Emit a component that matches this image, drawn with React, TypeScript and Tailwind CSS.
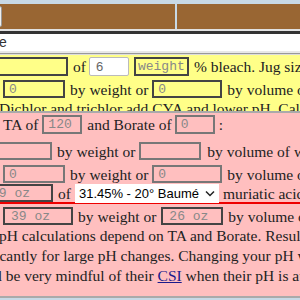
import React from "react";

const serif = { fontFamily: '"Liberation Serif", "Times New Roman", serif' };
const sans = { fontFamily: '"Liberation Sans", Arial, sans-serif' };

function Box({ w, h = "h-[19px]", value, dark = false, bg = "bg-[#ffff88]", className = "" }: { w: string; h?: string; value: string; dark?: boolean; bg?: string; className?: string }) {
  return (
    <div
      className={`${w} ${h} shrink-0 ${bg} border-2 ${dark ? "border-[#444]" : "border-[#777]"} flex items-center pl-[4px] text-[13px] leading-[15px] text-[#888] overflow-hidden ${className}`}
      style={{ fontFamily: '"Liberation Mono", "Courier New", monospace' }}
    >
      {value}
    </div>
  );
}

export default function App() {
  return (
    <div className="w-[300px] h-[300px] overflow-hidden bg-[#c8d9e6] text-[15.5px] leading-[19px] text-[#222] whitespace-nowrap" style={serif}>
      {/* top bar */}
      <div className="h-[4px]" />
      <div className="h-[25px] flex">
        <div className="w-[175px] bg-[#996633] flex items-center overflow-hidden">
          <button className="ml-[-55px] h-[21px] pl-[6px] pr-[7px] bg-[#efefef] border border-[#999] rounded-[2px] text-[13px] leading-[15px] text-black" style={sans}>
            Update
          </button>
        </div>
        <div className="w-[2px]" />
        <div className="flex-1 bg-[#996633]" />
      </div>
      <div className="h-[2px] bg-[#e0e0e0]" />
      <div className="h-[3px] bg-[#333]" />
      <div className="h-[17px] bg-white flex items-center text-[14px] text-[#333]" style={sans}>
        <span className="ml-[-1px]">e</span>
      </div>
      <div className="h-[2px] bg-[#e8e8e8]" />
      <div className="h-[1px] bg-[#999]" />
      <div className="h-[1px] bg-[#ddd]" />

      {/* yellow section */}
      <div className="bg-[#ffff88] h-[56px] overflow-hidden">
        <div className="h-[19px] flex items-center mt-[2px] ml-[-20px]">
          <Box w="w-[88px]" value="" dark />
          <span className="ml-[5px]">of</span>
          <div className="ml-[3px] w-[40px] h-[19px] shrink-0 bg-white border border-[#bbb] rounded-[2px] flex items-center pl-[6px] text-[13px] text-[#666]" style={sans}>
            6
          </div>
          <Box w="w-[55px]" value="weight" dark className="!pl-[2px] ml-[5px]" />
          <span className="ml-[5px]">% bleach. Jug size</span>
        </div>
        <div className="h-[18px] flex items-center mt-[4px] ml-[3px]">
          <Box w="w-[62px]" h="h-[18px]" value="0" dark />
          <span className="ml-[5px]">by weight or</span>
          <Box w="w-[70px]" h="h-[18px]" value="0" dark className="ml-[4px]" />
          <span className="ml-[5px]">by volume of</span>
        </div>
        <div className="ml-[-1px] leading-[18px] mt-[2px]">Dichlor and trichlor add CYA and lower pH. Cal-hypo</div>
      </div>
      <div className="h-[2px] bg-[#aaa]" />

      {/* pink section */}
      <div className="bg-[#ffbfbf] h-[183px] overflow-hidden">
        <div className="h-[19px] flex items-center ml-[3px] mt-[2px]">
          <span>TA of</span>
          <Box w="w-[40px]" value="120" bg="bg-[#ffbfbf]" className="ml-[4px]" />
          <span className="ml-[5px]">and Borate of</span>
          <Box w="w-[40px]" value="0" bg="bg-[#ffbfbf]" className="ml-[3px]" />
          <span className="ml-[4px]">:</span>
        </div>
        <div className="h-[18px] flex items-center ml-[-20px] mt-[8px]">
          <Box w="w-[72px]" h="h-[18px]" value="" bg="bg-[#ffbfbf]" />
          <span className="ml-[5px]">by weight or</span>
          <Box w="w-[62px]" h="h-[18px]" value="" bg="bg-[#ffbfbf]" className="ml-[4px]" />
          <span className="ml-[6px]">by volume of water</span>
        </div>
        <div className="h-[18px] flex items-center ml-[3px] mt-[5px]">
          <Box w="w-[62px]" h="h-[18px]" value="0" bg="bg-[#ffbfbf]" />
          <span className="ml-[5px]">by weight or</span>
          <Box w="w-[70px]" h="h-[18px]" value="0" bg="bg-[#ffbfbf]" className="ml-[4px]" />
          <span className="ml-[5px]">by volume of</span>
        </div>
        <div className="h-[20px] border-b-2 border-[#e00] flex items-center mt-[1px]">
          <div className="h-[18px] flex items-center ml-[-14px]">
            <Box w="w-[67px]" h="h-[18px]" value="39 oz" bg="bg-[#ffbfbf]" dark className="!pl-[3px]" />
            <span className="ml-[5px]">of</span>
            <div className="ml-[4px] w-[144px] h-[19px] shrink-0 bg-white flex items-center justify-between pl-[4px] pr-[4px] text-[13px] text-black" style={sans}>
              <span>31.45% - 20° Baumé</span>
              <svg width="10" height="7" viewBox="0 0 10 7" fill="none" stroke="#222" strokeWidth="1.5">
                <path d="M1 1.5 L5 5.5 L9 1.5" />
              </svg>
            </div>
            <span className="ml-[4px]">muriatic acid</span>
          </div>
        </div>
        <div className="h-[18px] flex items-center ml-[3px] mt-[3px]">
          <Box w="w-[70px]" h="h-[18px]" value="39 oz" bg="bg-[#ffbfbf]" dark className="!pl-[6px]" />
          <span className="ml-[5px]">by weight or</span>
          <Box w="w-[62px]" h="h-[18px]" value="26 oz" bg="bg-[#ffbfbf]" dark className="!pl-[6px] ml-[5px]" />
          <span className="ml-[5px]">by volume of</span>
        </div>
        <div className="mt-[1px] leading-[20px]">
          <div className="ml-[-1px]">pH calculations depend on TA and Borate. Results</div>
          <div className="ml-[-10px]">ficantly for large pH changes. Changing your pH will</div>
          <div className="ml-[-6px]">d be very mindful of their <a className="text-[#1a1a8c] underline">CSI</a> when their pH is at</div>
          <div className="ml-[-2px] leading-[14px]">.</div>
        </div>
      </div>
      <div className="h-[2px] bg-[#aaa]" />
    </div>
  );
}
